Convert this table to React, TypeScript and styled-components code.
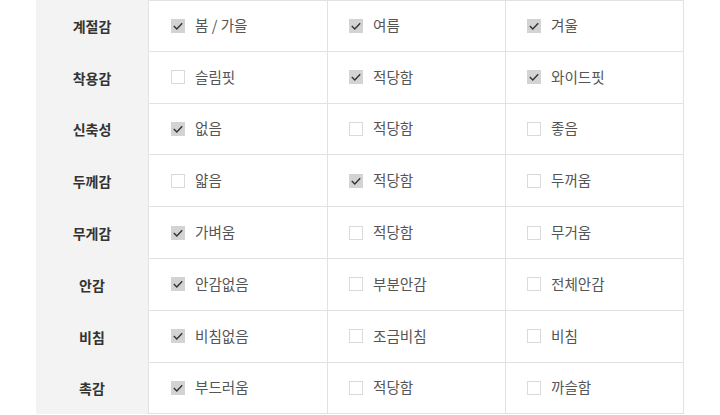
import React from "react";
import styled, { createGlobalStyle } from "styled-components";

const Global = createGlobalStyle`
  html, body { margin: 0; padding: 0; background: #ffffff; }
  body { font-family: "Noto Sans CJK KR", "Noto Sans", sans-serif; }
`;

const Page = styled.div`
  padding-left: 36px;
`;

const Table = styled.div`
  width: 648px;
  display: flex;
  flex-direction: column;
`;

const Row = styled.div`
  display: grid;
  grid-template-columns: 112px 180px 178px 178px;
  height: 51.8px;
`;

const Label = styled.div`
  background: #f3f3f3;
  display: flex;
  align-items: center;
  justify-content: center;
  font-size: 14px;
  font-weight: 700;
  color: #333333;
`;

const Cell = styled.div<{ $lead?: boolean; $top?: boolean }>`
  box-sizing: border-box;
  display: flex;
  align-items: center;
  gap: 10px;
  padding-left: ${(p) => (p.$lead ? 22 : 21)}px;
  border-right: 1px solid #e2e2e2;
  border-bottom: 1px solid #e2e2e2;
  border-left: ${(p) => (p.$lead ? "1px solid #e2e2e2" : "none")};
  border-top: ${(p) => (p.$top ? "1px solid #e2e2e2" : "none")};
  font-size: 14.6px;
  color: #555555;
  white-space: nowrap;
`;

const Box = styled.span<{ $on: boolean }>`
  box-sizing: border-box;
  width: 14px;
  height: 14px;
  flex: none;
  display: flex;
  align-items: center;
  justify-content: center;
  background: ${(p) => (p.$on ? "#d3d3d3" : "#ffffff")};
  border: ${(p) => (p.$on ? "none" : "1px solid #dadada")};
`;

const Text = styled.span`
  line-height: 20px;
  margin-top: -1px;
`;

type Opt = [string, boolean];
const rows: [string, Opt[]][] = [
  ["계절감", [["봄 / 가을", true], ["여름", true], ["겨울", true]]],
  ["착용감", [["슬림핏", false], ["적당함", true], ["와이드핏", true]]],
  ["신축성", [["없음", true], ["적당함", false], ["좋음", false]]],
  ["두께감", [["얇음", false], ["적당함", true], ["두꺼움", false]]],
  ["무게감", [["가벼움", true], ["적당함", false], ["무거움", false]]],
  ["안감", [["안감없음", true], ["부분안감", false], ["전체안감", false]]],
  ["비침", [["비침없음", true], ["조금비침", false], ["비침", false]]],
  ["촉감", [["부드러움", true], ["적당함", false], ["까슬함", false]]],
];

function Check({ on }: { on: boolean }) {
  return (
    <Box $on={on}>
      {on && (
        <svg width="14" height="14" viewBox="0 0 14 14">
          <path d="M2.8 7 L5.8 10 L11.2 4.2" fill="none" stroke="#333333" strokeWidth="1.4" />
        </svg>
      )}
    </Box>
  );
}

export default function App() {
  return (
    <Page>
      <Global />
      <Table>
        {rows.map(([label, opts], i) => (
          <Row key={label}>
            <Label>{label}</Label>
            {opts.map(([t, on], j) => (
              <Cell key={j} $lead={j === 0} $top={i === 0}>
                <Check on={on} />
                <Text>{t}</Text>
              </Cell>
            ))}
          </Row>
        ))}
      </Table>
    </Page>
  );
}
